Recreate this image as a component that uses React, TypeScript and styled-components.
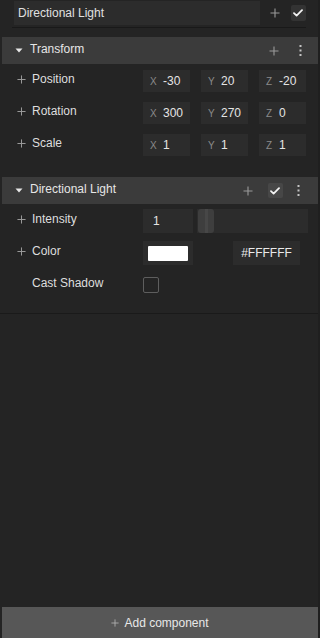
import React from 'react'
import styled, { createGlobalStyle } from 'styled-components'

const Global = createGlobalStyle`
  html, body {
    margin: 0;
    padding: 0;
    background: #242424;
  }
  body {
    font-family: "Liberation Sans", Arial, sans-serif;
    font-size: 12px;
    color: #e2e2e2;
  }
`

const Plus = ({ size = 9, color = '#9a9a9a' }: { size?: number; color?: string }) => (
  <svg width={size} height={size} viewBox="0 0 10 10">
    <path d="M5 0.5v9M0.5 5h9" stroke={color} strokeWidth="1.1" fill="none" />
  </svg>
)

const Check = () => (
  <svg width="10" height="8" viewBox="0 0 10 8">
    <path d="M1 4.2l2.6 2.4L9 1.2" stroke="#f2f2f2" strokeWidth="1.8" fill="none" strokeLinecap="round" strokeLinejoin="round" />
  </svg>
)

const Dots = () => (
  <svg width="3" height="11" viewBox="0 0 3 11">
    <rect x="0.5" y="0" width="2" height="2" fill="#c4c4c4" />
    <rect x="0.5" y="4.5" width="2" height="2" fill="#c4c4c4" />
    <rect x="0.5" y="9" width="2" height="2" fill="#c4c4c4" />
  </svg>
)

const Caret = () => (
  <svg width="8" height="5" viewBox="0 0 8 5">
    <path d="M0.5 0.5h7L4 4.5z" fill="#e8e8e8" />
  </svg>
)

const Panel = styled.div`
  display: flex;
  flex-direction: column;
  height: 638px;
  box-sizing: border-box;
  border-right: 2px solid #1f1f1f;
  overflow: hidden;
`

const NameBar = styled.div`
  display: flex;
  align-items: center;
  height: 24px;
  margin: 1px 12px 0 14px;
`

const NameInput = styled.div`
  flex: 0 0 246px;
  height: 24px;
  background: #2c2c2c;
  display: flex;
  align-items: center;
  padding-left: 4px;
  box-sizing: border-box;
  font-size: 12px;
  color: #e0e0e0;
`

const IconSlot = styled.div<{ $w?: number; $mr?: number }>`
  width: ${(p) => p.$w ?? 16}px;
  margin-right: ${(p) => p.$mr ?? 0}px;
  display: flex;
  align-items: center;
  justify-content: center;
`

const CheckBox = styled.div<{ $bg: string; $size: number }>`
  width: ${(p) => p.$size}px;
  height: ${(p) => p.$size}px;
  background: ${(p) => p.$bg};
  border-radius: 2px;
  display: flex;
  align-items: center;
  justify-content: center;
`

const Divider = styled.div<{ $inset: number }>`
  height: 1px;
  background: #191919;
  margin: 2px ${(p) => p.$inset}px 0;
`

const Header = styled.div<{ $top: number }>`
  display: flex;
  align-items: center;
  height: 27px;
  margin: ${(p) => p.$top}px 0 0 2px;
  background: #3b3b3b;
  padding-left: 13px;
`

const HeaderTitle = styled.span`
  margin-left: 7px;
  flex: 1;
  font-size: 12px;
  color: #e6e6e6;
  position: relative;
  top: -2px;
`

const Rows = styled.div<{ $top: number; $gap: number }>`
  display: flex;
  flex-direction: column;
  gap: ${(p) => p.$gap}px;
  padding-top: ${(p) => p.$top}px;
`

const Row = styled.div<{ $h: number }>`
  display: flex;
  align-items: center;
  height: ${(p) => p.$h}px;
`

const Label = styled.div`
  width: 143px;
  flex: 0 0 143px;
  display: flex;
  align-items: center;
  padding-left: 17px;
  box-sizing: border-box;
  gap: 6px;
  font-size: 12px;
  color: #dedede;
  position: relative;
  top: -2px;
`

const NoIcon = styled.span`
  width: 9px;
`

const Vec = styled.div`
  display: flex;
  gap: 11px;
`

const Field = styled.div<{ $w: number; $h: number }>`
  width: ${(p) => p.$w}px;
  height: ${(p) => p.$h}px;
  background: #2c2c2c;
  display: flex;
  align-items: center;
  box-sizing: border-box;
  padding-left: 7px;
  font-size: 12px;
  color: #e4e4e4;
`

const Axis = styled.span`
  color: #8a8a8a;
  font-size: 10px;
  width: 13px;
`

const Slider = styled.div`
  margin-left: 4px;
  width: 111px;
  height: 24px;
  background: #2c2c2c;
  display: flex;
  align-items: center;
  padding-left: 1px;
  box-sizing: border-box;
`

const Thumb = styled.div`
  width: 16px;
  height: 24px;
  border-radius: 3px;
  background: #3e3e3e;
  display: flex;
  justify-content: center;
  &::after {
    content: '';
    width: 3px;
    background: #474747;
  }
`

const SwatchBox = styled.div`
  width: 50px;
  height: 24px;
  background: #2c2c2c;
  display: flex;
  align-items: center;
  justify-content: center;
`

const Swatch = styled.div`
  width: 40px;
  height: 15px;
  background: #ffffff;
  border-radius: 1px;
`

const Hex = styled.div`
  margin-left: 40px;
  width: 67px;
  height: 24px;
  background: #2c2c2c;
  display: flex;
  align-items: center;
  justify-content: center;
  font-size: 12px;
  color: #eaeaea;
`

const Tick = styled.div`
  width: 16px;
  height: 16px;
  border: 1.5px solid #5e5e5e;
  border-radius: 2px;
  box-sizing: border-box;
`

const SectionEnd = styled.div`
  height: 1px;
  background: #1a1a1a;
  margin-top: 16px;
`

const AddButton = styled.div`
  margin: auto 0 0 2px;
  height: 31px;
  background: #575757;
  display: flex;
  align-items: center;
  justify-content: center;
  gap: 5px;
  font-size: 12px;
  color: #e8e8e8;
`

const transform = [
  { name: 'Position', v: ['-30', '20', '-20'] },
  { name: 'Rotation', v: ['300', '270', '0'] },
  { name: 'Scale', v: ['1', '1', '1'] },
]

export default function App() {
  return (
    <>
      <Global />
      <Panel>
        <NameBar>
          <NameInput>Directional Light</NameInput>
          <IconSlot $w={32}>
            <Plus size={10} />
          </IconSlot>
          <CheckBox $bg="#333333" $size={16}>
            <Check />
          </CheckBox>
        </NameBar>
        <Divider $inset={12} />

        <Header $top={9}>
          <Caret />
          <HeaderTitle>Transform</HeaderTitle>
          <IconSlot $w={16}>
            <Plus size={10} />
          </IconSlot>
          <IconSlot $w={36}>
            <Dots />
          </IconSlot>
        </Header>
        <Rows $top={6} $gap={10}>
          {transform.map((r) => (
            <Row key={r.name} $h={22}>
              <Label>
                <Plus />
                {r.name}
              </Label>
              <Vec>
                {['X', 'Y', 'Z'].map((a, i) => (
                  <Field key={a} $w={47} $h={22}>
                    <Axis>{a}</Axis>
                    {r.v[i]}
                  </Field>
                ))}
              </Vec>
            </Row>
          ))}
        </Rows>

        <Header $top={21}>
          <Caret />
          <HeaderTitle>Directional Light</HeaderTitle>
          <IconSlot $w={16} $mr={4}>
            <Plus size={10} />
          </IconSlot>
          <IconSlot $w={30}>
            <CheckBox $bg="#474747" $size={15}>
              <Check />
            </CheckBox>
          </IconSlot>
          <IconSlot $w={16}>
            <Dots />
          </IconSlot>
          <IconSlot $w={12} />
        </Header>
        <Rows $top={5} $gap={8}>
          <Row $h={24}>
            <Label>
              <Plus />
              Intensity
            </Label>
            <Field $w={50} $h={24}>
              <span style={{ marginLeft: 3 }}>1</span>
            </Field>
            <Slider>
              <Thumb />
            </Slider>
          </Row>
          <Row $h={24}>
            <Label>
              <Plus />
              Color
            </Label>
            <SwatchBox>
              <Swatch />
            </SwatchBox>
            <Hex>#FFFFFF</Hex>
          </Row>
          <Row $h={24}>
            <Label>
              <NoIcon />
              Cast Shadow
            </Label>
            <Tick />
          </Row>
        </Rows>
        <SectionEnd />

        <AddButton>
          <Plus size={8} color="#b0b0b0" />
          Add component
        </AddButton>
      </Panel>
    </>
  )
}
